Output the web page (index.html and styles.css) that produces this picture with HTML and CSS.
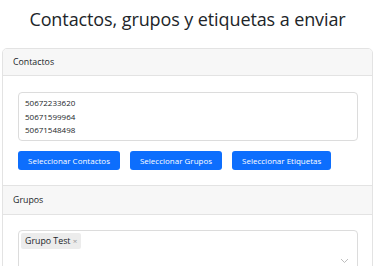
FILE: index.html
```html
<!DOCTYPE html>
<html lang="es">
<head>
    <meta charset="UTF-8">
    <meta name="viewport" content="width=device-width, initial-scale=1.0">
    <title>Enviar</title>
    <link rel="stylesheet" href="styles.css">
</head>
<body>
    <h2 class="page-title">Contactos, grupos y etiquetas a enviar</h2>

    <div class="card">
        <div class="card-header">Contactos</div>
        <div class="card-body">
            <div class="numbers">
                <div>50672233620</div>
                <div>50671599964</div>
                <div>50671548498</div>
            </div>
            <div class="actions">
                <button class="btn">Seleccionar Contactos</button>
                <button class="btn">Seleccionar Grupos</button>
                <button class="btn">Seleccionar Etiquetas</button>
            </div>
        </div>

        <div class="card-header header-tall">Grupos</div>
        <div class="card-body body-groups">
            <div class="multi-select">
                <span class="tag">Grupo Test <span class="tag-x">&times;</span></span>
                <svg class="chevron" width="9" height="6" viewBox="0 0 9 6">
                    <path d="M1 1 L4.5 4.5 L8 1" fill="none" stroke="#b5b5b5" stroke-width="0.9"/>
                </svg>
            </div>
        </div>
    </div>
</body>
</html>
```

FILE: styles.css
```css
body {
    margin: 0;
    padding: 0 2px 0 2px;
    font-family: "Open Sans", sans-serif;
    color: #212529;
    background: #fff;
}

.page-title {
    margin: 0;
    padding: 6px 0 16px 0;
    font-size: 18px;
    font-weight: 500;
    text-align: center;
    line-height: 26px;
    white-space: nowrap;
    letter-spacing: -0.1px;
}

.card {
    border: 1px solid #e3e3e3;
    border-radius: 5px;
    overflow: hidden;
}

.card-header {
    background: #f7f7f7;
    border-bottom: 1px solid #e3e3e3;
    font-size: 8.8px;
    padding: 0 10px;
    height: 26px;
    line-height: 26px;
}

.header-tall {
    height: 28px;
    line-height: 28px;
}

.card-body {
    padding: 16px 15px 15px 15px;
    border-bottom: 1px solid #e3e3e3;
}

.card-body:last-child {
    border-bottom: none;
}

.body-groups {
    padding-top: 15px;
}

.numbers {
    border: 1px solid #dcdcdc;
    border-radius: 4px;
    padding: 3px 6px 3px 6px;
    font-size: 8px;
    line-height: 13.5px;
    width: 326px;
}

.actions {
    display: flex;
    gap: 10px;
    margin-top: 10px;
}

.btn {
    flex: none;
    white-space: nowrap;
    background: #0d6efd;
    color: #fff;
    border: none;
    border-radius: 3px;
    font-family: "Open Sans", sans-serif;
    font-size: 8px;
    height: 19px;
    padding: 0 10px;
}

.multi-select {
    position: relative;
    display: flex;
    align-items: flex-start;
    border: 1px solid #dcdcdc;
    border-radius: 4px;
    width: 340px;
    height: 50px;
    box-sizing: border-box;
    padding: 2px 2px;
}

.tag {
    background: #ececec;
    border-radius: 2px;
    font-size: 8.8px;
    padding: 0 4px;
    line-height: 15px;
}

.tag-x {
    color: #999;
    font-size: 8px;
}

.chevron {
    position: absolute;
    right: 8px;
    top: 27px;
}
```
